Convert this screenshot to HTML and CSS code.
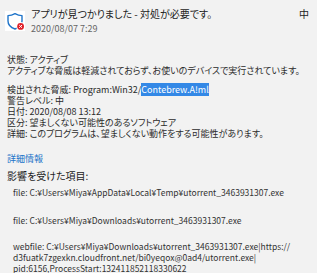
FILE: index.html
```html
<!DOCTYPE html>
<html lang="ja">
<head>
  <meta charset="UTF-8">
  <title>アプリが見つかりました</title>
  <link rel="stylesheet" href="styles.css">
</head>
<body>
  <div class="panel">
    <div class="header">
      <div class="icon">
        <svg width="20" height="20" viewBox="0 0 20 20">
          <path d="M10 2.6 C12.4 4 14.8 4.6 17 4.6 V10 C17 14 14.2 16.6 10 18 C5.8 16.6 3 14 3 10 V4.6 C5.2 4.6 7.6 4 10 2.6 Z" fill="none" stroke="#1f74c9" stroke-width="1.4" stroke-linejoin="round"/>
          <circle cx="15.6" cy="15.4" r="4.4" fill="#fff"/>
          <circle cx="15.6" cy="15.4" r="3.4" fill="#e0202a"/>
          <path d="M14.2 14 L17 16.8 M17 14 L14.2 16.8" stroke="#fff" stroke-width="1"/>
        </svg>
      </div>
      <div class="head-text">
        <div class="title">アプリが見つかりました - 対処が必要です。</div>
        <div class="date">2020/08/07 7:29</div>
      </div>
      <div class="level">中</div>
    </div>

    <div class="body">
      <div class="block">
        <div>状態: アクティブ</div>
        <div>アクティブな脅威は軽減されておらず、お使いのデバイスで実行されています。</div>
      </div>
      <div class="block details">
        <div>検出された脅威: Program:Win32/<span class="selected">Contebrew.A!ml</span></div>
        <div>警告レベル: 中</div>
        <div>日付: 2020/08/08 13:12</div>
        <div>区分: 望ましくない可能性のあるソフトウェア</div>
        <div>詳細: このプログラムは、望ましくない動作をする可能性があります。</div>
      </div>
      <a class="more" href="#">詳細情報</a>
      <div class="affected">影響を受けた項目:</div>
      <div class="item item-first">file: C:¥Users¥Miya¥AppData¥Local¥Temp¥utorrent_3463931307.exe</div>
      <div class="item">file: C:¥Users¥Miya¥Downloads¥utorrent_3463931307.exe</div>
      <div class="item item-web">webfile: C:¥Users¥Miya¥Downloads¥utorrent_3463931307.exe|https://<br>d3fuatk7zgexkn.cloudfront.net/bi0yeqox@0ad4/utorrent.exe|<br>pid:6156,ProcessStart:132411852118330622</div>
    </div>
  </div>
</body>
</html>
```

FILE: styles.css
```css
body {
  margin: 0;
  background-color: #fff;
  color: #2b2b2b;
  font-family: "Noto Sans CJK JP", sans-serif;
  font-feature-settings: "palt";
}
.panel {
  width: 317px;
  height: 273px;
  background-color: #f2f2f2;
  overflow: hidden;
}
.header {
  display: flex;
  padding: 7px 8px 0 5px;
}
.icon {
  width: 20px;
  height: 20px;
  background-color: #fff;
  margin-top: 4px;
  margin-right: 6px;
}
.icon svg {
  display: block;
}
.head-text {
  flex: 1;
}
.title {
  font-size: 10px;
  line-height: 14px;
  color: #222;
}
.date {
  font-size: 9px;
  line-height: 12px;
  color: #666;
  margin-top: 2px;
}
.level {
  font-size: 10px;
  line-height: 14px;
  color: #222;
}
.body {
  padding: 19px 7px 0 7px;
  font-size: 9px;
  line-height: 11px;
}
.details {
  margin-top: 8px;
}
.selected {
  background-color: #3388e6;
  color: #fff;
}
.more {
  display: block;
  margin-top: 14px;
  color: #1a73c8;
  text-decoration: none;
  font-size: 9px;
  line-height: 12px;
}
.affected {
  margin-top: 4px;
  font-size: 10px;
  line-height: 14px;
  color: #1a1a1a;
}
.item {
  padding-left: 6px;
  margin-top: 11px;
  font-size: 8.5px;
  line-height: 11px;
  color: #333;
}
.item-first {
  margin-top: 4px;
  margin-bottom: 17px;
}
.item-web {
  margin-top: 15px;
}
```
